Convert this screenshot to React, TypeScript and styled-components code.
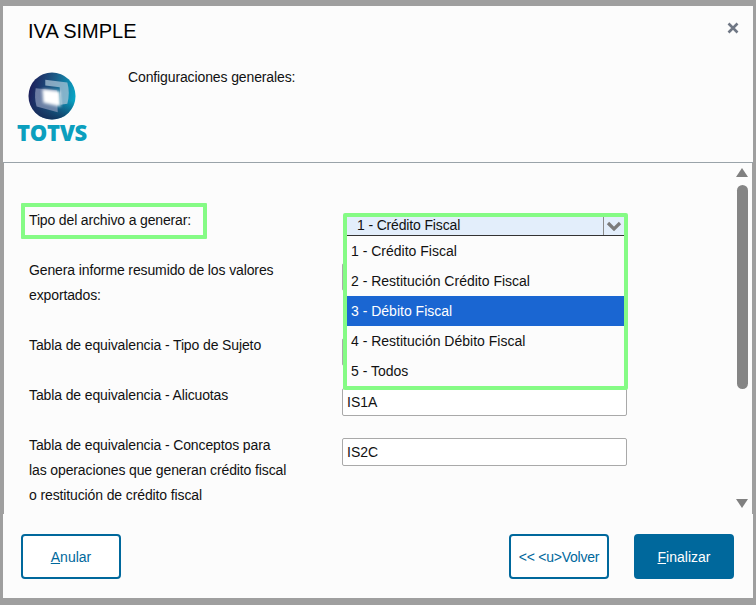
import { createGlobalStyle, styled } from "styled-components";

const OPTIONS = [
  "1 - Crédito Fiscal",
  "2 - Restitución Crédito Fiscal",
  "3 - Débito Fiscal",
  "4 - Restitución Débito Fiscal",
  "5 - Todos",
];

const PRIMARY = "#00689c";

const GlobalStyle = createGlobalStyle`
  html, body {
    margin: 0;
    padding: 0;
    background: #9f9f9f;
  }
  * {
    box-sizing: border-box;
  }
`;

function TotvsLogo() {
  return (
    <LogoWrap>
      <svg width="48" height="48" viewBox="0 0 50 50">
        <defs>
          <linearGradient id="ball" x1="0" y1="0.3" x2="1" y2="0.5">
            <stop offset="0" stopColor="#1d1c58" />
            <stop offset="0.5" stopColor="#1c5a86" />
            <stop offset="1" stopColor="#08a6c6" />
          </linearGradient>
          <linearGradient id="shade" x1="0" y1="0" x2="0" y2="1">
            <stop offset="0.6" stopColor="#12204a" stopOpacity="0" />
            <stop offset="1" stopColor="#12204a" stopOpacity="0.75" />
          </linearGradient>
          <filter id="soft">
            <feGaussianBlur stdDeviation="1.8" />
          </filter>
          <filter id="softer">
            <feGaussianBlur stdDeviation="0.6" />
          </filter>
        </defs>
        <circle cx="25" cy="25" r="24.5" fill="url(#ball)" />
        <circle cx="25" cy="25" r="24.5" fill="url(#shade)" />
        <path
          d="M18 8 L41 11 C43 18 43 26 41 33 L34 34 L33 16 L18 14Z"
          fill="#a9c3d6"
          opacity="0.75"
          filter="url(#softer)"
        />
        <path
          d="M8 17 L30 19 L31 42 L9 36 C7 30 7 23 8 17Z"
          fill="#8f9cbc"
          opacity="0.7"
          filter="url(#softer)"
        />
        <path
          d="M15 18 L33 20 L34 36 L16 32Z"
          fill="#ffffff"
          filter="url(#soft)"
        />
      </svg>
      <LogoText>TOTVS</LogoText>
    </LogoWrap>
  );
}

function App() {
  return (
    <>
      <GlobalStyle />
      <Page>
        <Dialog>
          <Header>
            <Title>IVA SIMPLE</Title>
            <CloseButton aria-label="Cerrar">
              <svg width="12" height="12" viewBox="0 0 12 12">
                <path
                  d="M1.5 1.5 L10.5 10.5 M10.5 1.5 L1.5 10.5"
                  stroke="#6f7784"
                  strokeWidth="2.6"
                />
              </svg>
            </CloseButton>
            <HeaderRow>
              <TotvsLogo />
              <Subtitle>Configuraciones generales:</Subtitle>
            </HeaderRow>
          </Header>

          <Body>
            <Form>
              <Row $after={19}>
                <HighlightLabel>Tipo del archivo a generar:</HighlightLabel>
                <SelectAnchor>
                  <DropdownFrame>
                    <SelectBar>
                      <SelectValue>1 - Crédito Fiscal</SelectValue>
                      <SelectArrow>
                        <svg width="16" height="10" viewBox="0 0 16 10">
                          <path
                            d="M2 2 L8 8 L14 2"
                            fill="none"
                            stroke="#7b7b7b"
                            strokeWidth="3.2"
                          />
                        </svg>
                      </SelectArrow>
                    </SelectBar>
                    <OptionList>
                      {OPTIONS.map((option, index) => (
                        <Option key={option} $active={index === 2}>
                          {option}
                        </Option>
                      ))}
                    </OptionList>
                  </DropdownFrame>
                </SelectAnchor>
              </Row>
              <Row>
                <Label>
                  Genera informe resumido de los valores
                  <br />
                  exportados:
                </Label>
                <Field />
              </Row>
              <Row>
                <Label>Tabla de equivalencia - Tipo de Sujeto</Label>
                <Field />
              </Row>
              <Row>
                <Label>Tabla de equivalencia - Alicuotas</Label>
                <Field>IS1A</Field>
              </Row>
              <Row>
                <Label>
                  Tabla de equivalencia - Conceptos para
                  <br />
                  las operaciones que generan crédito fiscal
                  <br />o restitución de crédito fiscal
                </Label>
                <Field>IS2C</Field>
              </Row>
            </Form>
            <ScrollBar>
              <ArrowUp />
              <Thumb />
              <ArrowDown />
            </ScrollBar>
          </Body>

          <Footer>
            <OutlineButton>
              <u>A</u>nular
            </OutlineButton>
            <FooterRight>
              <BackButton>{"<< <u>Volver"}</BackButton>
              <PrimaryButton>
                <u>F</u>inalizar
              </PrimaryButton>
            </FooterRight>
          </Footer>
        </Dialog>
      </Page>
    </>
  );
}

const Page = styled.div`
  width: 756px;
  height: 605px;
  padding: 6px 3px;
  overflow: hidden;
  font-family: "Liberation Sans", Arial, sans-serif;
  font-size: 14px;
  color: #111;
`;
const Dialog = styled.div`
  width: 750px;
  height: 592px;
  display: flex;
  flex-direction: column;
`;
const Header = styled.header`
  position: relative;
  height: 157px;
  flex: none;
  background: #fcfcfc;
  border-bottom: 1px solid #9aa3a9;
  padding: 13px 15px 0 15px;
`;
const Title = styled.h1`
  margin: 0 0 0 10px;
  font-size: 20px;
  font-weight: 400;
  line-height: 24px;
  color: #000;
`;
const CloseButton = styled.button`
  position: absolute;
  top: 16px;
  right: 14px;
  padding: 0;
  border: 0;
  background: none;
  display: flex;
`;
const HeaderRow = styled.div`
  display: flex;
  align-items: flex-start;
  margin-top: 26px;
`;
const LogoWrap = styled.div`
  width: 68px;
  margin-top: 3px;
  display: flex;
  flex-direction: column;
  align-items: center;
`;
const LogoText = styled.div`
  margin-top: 2px;
  font-family: "Open Sans", "Liberation Sans", sans-serif;
  font-size: 22px;
  line-height: 20px;
  font-weight: 800;
  letter-spacing: -0.3px;
  color: #0b9fbe;
`;
const Subtitle = styled.p`
  margin: 0 0 0 42px;
  line-height: 17px;
  letter-spacing: -0.12px;
  color: #111;
`;
const Body = styled.div`
  flex: 1;
  min-height: 0;
  margin: 0 1px;
  display: flex;
  background: #fcfcfc;
  overflow: hidden;
`;
const Form = styled.div`
  flex: 1;
  padding: 40px 0 0 17px;
`;
const Row = styled.div<{ $after?: number }>`
  display: grid;
  grid-template-columns: 321px 285px;
  align-items: start;
  margin-bottom: ${(props) => props.$after ?? 25}px;
`;
const Label = styled.div`
  padding-left: 8px;
  line-height: 25px;
  letter-spacing: -0.12px;
`;
const HighlightLabel = styled.div`
  justify-self: start;
  width: 186px;
  height: 36px;
  padding: 0 4px;
  border: 4px solid #85fb85;
  border-radius: 1px;
  line-height: 26px;
  letter-spacing: -0.15px;
`;
const SelectAnchor = styled.div`
  position: relative;
  height: 36px;
`;
const DropdownFrame = styled.div`
  position: absolute;
  z-index: 2;
  top: 10px;
  left: 1px;
  width: 285px;
  border: 4px solid #85fb85;
  border-radius: 2px;
  background: #fcfcfc;
`;
const SelectBar = styled.div`
  height: 19px;
  display: flex;
  background: #e3eefb;
  border-bottom: 1px solid #333;
`;
const SelectValue = styled.div`
  flex: 1;
  padding-left: 10px;
  line-height: 17px;
  letter-spacing: -0.15px;
`;
const SelectArrow = styled.div`
  width: 21px;
  border-left: 1px solid #8a8a8a;
  display: flex;
  align-items: center;
  justify-content: center;
`;
const OptionList = styled.ul`
  list-style: none;
  margin: 0;
  padding: 0;
`;
const Option = styled.li<{ $active?: boolean }>`
  height: 30px;
  padding-left: 4px;
  line-height: 30px;
  color: ${(props) => (props.$active ? "#fff" : "#111")};
  background: ${(props) => (props.$active ? "#1a66d2" : "transparent")};
`;
const Field = styled.div`
  height: 28px;
  margin: 5px 0 -8px;
  padding-left: 4px;
  line-height: 26px;
  background: #fff;
  border: 1px solid #a9a9a9;
  border-radius: 2px;
`;
const ScrollBar = styled.div`
  position: relative;
  width: 20px;
  flex: none;
  display: flex;
  flex-direction: column;
  align-items: center;
  padding: 5px 0 6px;
`;
const ArrowUp = styled.div`
  width: 0;
  height: 0;
  border-left: 6.5px solid transparent;
  border-right: 6.5px solid transparent;
  border-bottom: 9px solid #808080;
`;
const Thumb = styled.div`
  width: 11px;
  height: 204px;
  margin-top: 8px;
  border-radius: 6px;
  background: #858585;
`;
const ArrowDown = styled.div`
  width: 0;
  height: 0;
  margin-top: auto;
  border-left: 6.5px solid transparent;
  border-right: 6.5px solid transparent;
  border-top: 9px solid #808080;
`;
const Footer = styled.footer`
  height: 84px;
  flex: none;
  display: flex;
  align-items: flex-start;
  justify-content: space-between;
  padding: 20px 19px 0 18px;
  background: #fcfcfc;
`;
const FooterRight = styled.div`
  display: flex;
  gap: 25px;
`;
const OutlineButton = styled.button`
  width: 100px;
  height: 45px;
  padding: 0;
  border: 2px solid ${PRIMARY};
  border-radius: 4px;
  background: #fff;
  color: ${PRIMARY};
  font-family: inherit;
  font-size: 14px;
`;
const BackButton = styled(OutlineButton)`
  letter-spacing: -0.25px;
`;
const PrimaryButton = styled(OutlineButton)`
  background: ${PRIMARY};
  color: #fff;
`;

export default App;
